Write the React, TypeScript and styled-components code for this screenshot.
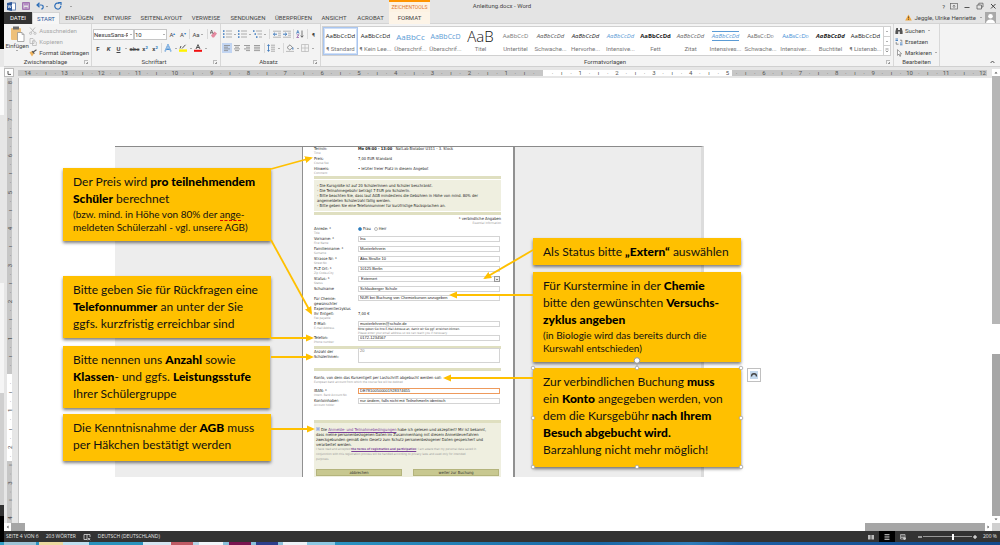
import React from "react";
import styled, { createGlobalStyle, css } from "styled-components";

const ui = `Roboto, "Open Sans", sans-serif`;
const web = `"DejaVu Sans Condensed", "DejaVu Sans", sans-serif`;

const GlobalStyle = createGlobalStyle`
  * { box-sizing: border-box; }
  body { margin: 0; background: #000; font-family: ${ui}; font-size: 6px; color: #444; }
  button, input, select, textarea {
    font: inherit; color: inherit; margin: 0; padding: 0; border: 0;
    background: none; border-radius: 0; appearance: none; outline: 0;
  }
`;

/* ---------- shell ---------- */
const Desktop = styled.div`
  display: flex;
  flex-direction: column;
  min-height: 100vh;
  overflow: hidden;
`;
const Windows = styled.div`
  flex: 1;
  display: flex;
`;
const BackWindow = styled.div`
  width: 4px;
  flex: none;
  display: flex;
  flex-direction: column;
  background: #000;
`;
const BackPart = styled.div<{ $h?: number; $c: string }>`
  flex: ${(p) => (p.$h ? `0 0 ${p.$h}px` : 1)};
  background: ${(p) => p.$c};
`;
const WordWindow = styled.div`
  flex: 1;
  min-width: 0;
  display: flex;
  flex-direction: column;
  background: #e6e6e6;
`;
const Taskbar = styled.div`
  height: 3px;
  display: flex;
  padding-left: 4px;
  background: linear-gradient(90deg, #2f9fc4 0%, #2b93c2 34%, #1a67a6 60%, #2f7dbb 69%, #1d5fa6 74%, #134a8c 100%);
`;
const Task = styled.div<{ $c: string; $w: number }>`
  width: ${(p) => p.$w}px;
  background: ${(p) => p.$c};
`;

/* ---------- title bar and tabs ---------- */
const TitleBar = styled.header`
  height: 12px;
  display: grid;
  grid-template-columns: 1fr auto 1fr;
  background: #e4e4e4;
  line-height: 11px;
`;
const TitleLeft = styled.div`
  display: flex;
`;
const QuickAccess = styled.div`
  width: 385px;
  display: flex;
  align-items: center;
  gap: 6px;
  padding-left: 3px;
`;
const ToolTabTitle = styled.div`
  width: 41px;
  text-align: center;
  color: #e0782c;
  background: #fdf2e2;
  border-top: 2px solid #ff9500;
  font-size: 5px;
  line-height: 10px;
`;
const Controls = styled.div`
  display: flex;
  justify-content: flex-end;
  align-items: center;
  gap: 5px;
  padding-right: 3px;
`;
const IconButton = styled.button`
  display: flex;
  align-items: center;
  justify-content: center;
`;
const TabRow = styled.nav`
  height: 12px;
  display: flex;
  background: #e4e4e4;
  border-bottom: 1px solid #d4d4d4;
`;
const Tab = styled.button<{ $w: number; $kind?: "file" | "active" | "tool" }>`
  width: ${(p) => p.$w}px;
  height: 12px;
  line-height: 12px;
  text-align: center;
  ${(p) => p.$kind === "file" && css`background: #333; color: #fff;`}
  ${(p) => p.$kind === "active" && css`background: #f6f6f6; color: #2b579a; border: 1px solid #d4d4d4; border-bottom: 0; line-height: 10px;`}
  ${(p) => p.$kind === "tool" && css`background: #fdf4e7;`}
`;
const Account = styled.button`
  margin-left: auto;
  display: flex;
  align-items: center;
  gap: 2px;
  padding-right: 4px;
  white-space: nowrap;
`;

/* ---------- ribbon ---------- */
const Ribbon = styled.section`
  height: 43px;
  display: flex;
  background: #f3f3f3;
  border-bottom: 1px solid #d0d0d0;
`;
const Group = styled.div<{ $w?: number }>`
  flex: ${(p) => (p.$w ? `0 0 ${p.$w}px` : "1 1 0")};
  min-width: 0;
  display: flex;
  flex-direction: column;
  border-right: 1px solid #d8d8d8;
`;
const GroupBody = styled.div`
  flex: 1;
  display: flex;
  padding: 1px 2px 0 1px;
`;
const GroupLabel = styled.div`
  display: flex;
  align-items: center;
  height: 9px;
  padding: 0 3px;
  line-height: 8px;
  span { flex: 1; text-align: center; }
`;
const Launcher = styled.button`
  width: 4px;
  height: 4px;
  border-left: 1px solid #bbb;
  border-top: 1px solid #bbb;
  background: linear-gradient(135deg, transparent 60%, #999 60%);
`;
const PasteButton = styled.button`
  width: 25px;
  display: flex;
  flex-direction: column;
  align-items: center;
  line-height: 8px;
`;
const Stack = styled.div`
  display: flex;
  flex-direction: column;
`;
const LabelButton = styled.button<{ $off?: boolean }>`
  height: 11px;
  display: flex;
  align-items: center;
  gap: 2px;
  white-space: nowrap;
  color: ${(p) => (p.$off ? "#a6a6a6" : "#444")};
`;
const ToolRows = styled.div`
  display: flex;
  flex-direction: column;
  padding-top: 2px;
`;
const ToolRow = styled.div`
  height: 14px;
  display: flex;
  align-items: center;
`;
const Tool = styled.button<{ $w?: number; $on?: boolean; $b?: boolean; $i?: boolean; $u?: boolean; $s?: boolean }>`
  width: ${(p) => p.$w || 10}px;
  height: 10px;
  display: flex;
  align-items: center;
  justify-content: center;
  line-height: 9px;
  white-space: nowrap;
  background: ${(p) => (p.$on ? "#c2d5f2" : "none")};
  font-weight: ${(p) => (p.$b ? 700 : 400)};
  font-style: ${(p) => (p.$i ? "italic" : "normal")};
  text-decoration: ${(p) => (p.$u ? "underline" : p.$s ? "line-through" : "none")};
  sub, sup { font-size: 4px; line-height: 4px; color: #2b79c2; }
`;
const Caret = styled.span<{ $w?: number }>`
  width: ${(p) => p.$w || 5}px;
  display: flex;
  justify-content: center;
  &::after {
    content: "";
    border: 1px solid transparent;
    border-top-color: #666;
    border-bottom: 0;
  }
`;
const Divider = styled.span<{ $w?: number }>`
  width: ${(p) => p.$w || 3}px;
  height: 10px;
  display: flex;
  justify-content: center;
  &::after { content: ""; width: 1px; background: #d8d8d8; }
`;
const Combo = styled.div<{ $w: number }>`
  width: ${(p) => p.$w}px;
  height: 11px;
  display: flex;
  align-items: center;
  background: #fff;
  border: 1px solid #c6c6c6;
  select { flex: 1; min-width: 0; height: 9px; line-height: 9px; color: #333; }
`;
const Gallery = styled.div`
  flex: 1;
  min-width: 0;
  height: 30px;
  display: flex;
  margin-top: 1px;
  background: #fff;
  border: 1px solid #d0d0d0;
`;
const StyleItem = styled.button<{ $on?: boolean }>`
  flex: 1 1 0;
  min-width: 0;
  display: flex;
  flex-direction: column;
  align-items: center;
  border: 1px solid ${(p) => (p.$on ? "#a9c5ee" : "transparent")};
  box-shadow: ${(p) => (p.$on ? "inset 0 0 0 1px #cfdff7" : "none")};
`;
type SampleProps = { $c?: string; $size?: number; $b?: boolean; $i?: boolean; $caps?: boolean; $line?: boolean; $light?: boolean };
const Sample = styled.span<SampleProps>`
  height: 16px;
  display: flex;
  align-items: center;
  white-space: nowrap;
  font-family: "Open Sans", sans-serif;
  color: ${(p) => p.$c || "#222"};
  font-size: ${(p) => p.$size || 6}px;
  font-weight: ${(p) => (p.$b ? 700 : p.$light ? 300 : 400)};
  font-style: ${(p) => (p.$i ? "italic" : "normal")};
  font-variant: ${(p) => (p.$caps ? "small-caps" : "normal")};
  ${(p) => p.$line && css`
    height: 10px; margin: 3px 0; border-top: 1px solid #5b9bd5; border-bottom: 1px solid #5b9bd5;
  `}
`;
const StyleName = styled.span`
  line-height: 9px;
  white-space: nowrap;
  color: #777;
`;
const GalleryScroll = styled.div`
  width: 7px;
  display: flex;
  flex-direction: column;
  border-left: 1px solid #d0d0d0;
  button { flex: 1; display: flex; align-items: center; justify-content: center; }
  button + button { border-top: 1px solid #d0d0d0; }
`;
const RibbonTail = styled.div`
  flex: 0 0 60px;
  display: flex;
  align-items: flex-end;
  justify-content: flex-end;
  padding: 2px 5px;
`;

/* ---------- work area ---------- */
const Work = styled.main`
  flex: 1;
  display: flex;
`;
const WorkMain = styled.div`
  flex: 1;
  min-width: 0;
  display: flex;
  flex-direction: column;
`;
const RulerRow = styled.div`
  height: 11px;
  display: flex;
  align-items: center;
  padding-right: 5px;
`;
const TabStop = styled.button`
  width: 10px;
  height: 9px;
  margin-right: 4px;
  background: #fff;
  border: 1px solid #bbb;
  display: flex;
  align-items: center;
  justify-content: center;
`;
const HRuler = styled.div`
  flex: 1;
  height: 6px;
  display: flex;
  line-height: 6px;
`;
const Segment = styled.div<{ $f: number; $white?: boolean; $pad?: string; $col?: boolean }>`
  flex: ${(p) => p.$f} 1 0;
  min-width: 0;
  min-height: 0;
  display: flex;
  flex-direction: ${(p) => (p.$col ? "column" : "row")};
  padding: ${(p) => p.$pad || 0};
  background: ${(p) => (p.$white ? "#fff" : "#c6c6c6")};
  color: #555;
`;
const Tick = styled.span<{ $col?: boolean }>`
  flex: 1 1 0;
  min-width: 0;
  min-height: 0;
  display: flex;
  align-items: center;
  justify-content: center;
  ${(p) => p.$col && css`writing-mode: vertical-rl; transform: rotate(180deg); line-height: 6px;`}
`;
const PageRow = styled.div`
  flex: 1;
  display: flex;
  min-height: 445px;
`;
const VRuler = styled.div`
  width: 5px;
  margin: 0 6px 0 3px;
  display: flex;
  flex-direction: column;
`;
const Canvas = styled.div`
  flex: 1;
  position: relative;
  overflow: hidden;
  background: #fff;
  border-left: 1px solid #c6c6c6;
`;
const ScrollV = styled.div`
  width: 8px;
  display: flex;
  flex-direction: column;
  padding-top: 2px;
  background: #e6e6e6;
`;
const ScrollH = styled.div`
  height: 8px;
  display: flex;
`;
const Track = styled.div<{ $f: string; $c: string }>`
  flex: ${(p) => p.$f};
  background: ${(p) => p.$c};
`;
const ArrowButton = styled.button`
  flex: 0 0 7px;
  background: #fff;
  display: flex;
  align-items: center;
  justify-content: center;
`;
const Status = styled.footer`
  height: 11px;
  display: flex;
  align-items: center;
  gap: 7px;
  padding: 0 3px 0 2px;
  background: #333;
  color: #e6e6e6;
  font-family: "Open Sans", sans-serif;
  font-size: 5px;
  line-height: 11px;
`;
const ViewButtons = styled.div`
  margin-left: auto;
  display: flex;
  height: 11px;
  button { width: 16px; display: flex; align-items: center; justify-content: center; }
  button:nth-child(2) { background: #000; }
`;
const Zoom = styled.label`
  display: flex;
  align-items: center;
  gap: 1px;
  input { width: 49px; height: 6px; background: linear-gradient(#999, #999) center / 100% 1px no-repeat; }
  input::-webkit-slider-thumb { appearance: none; width: 2px; height: 6px; background: #fff; }
  output { margin-left: 5px; }
`;

/* ---------- objects placed on the page ---------- */
const Shot = styled.div`
  position: absolute;
  left: 96px;
  top: 68px;
  width: 589px;
  height: 331px;
  display: flex;
  overflow: hidden;
  background: #ededed;
  border-top: 1px solid #8a8a8a;
  border-right: 3px solid #dcdcdc;
  padding-left: 187px;
`;
const Form = styled.form`
  width: 213px;
  padding: 0 12px 0 11px;
  background: #fff;
  border-left: 1px solid #909090;
  border-right: 2px solid #909090;
  font-family: ${web};
  font-size: 4px;
  line-height: 4px;
  color: #222;
  white-space: nowrap;
`;
const Band = styled.div<{ $top?: number }>`
  height: 3px;
  margin-top: ${(p) => p.$top || 0}px;
  background: #dfdfc0;
`;
const Notice = styled.div`
  margin: 1px 0;
  padding: 3px;
  background: #efefe0;
  line-height: 5px;
`;
const Required = styled.div`
  margin: 2px 0;
  text-align: right;
`;
const Row = styled.div<{ $h?: number }>`
  height: ${(p) => p.$h || 10}px;
  display: grid;
  grid-template-columns: 44px 1fr;
  align-items: start;
`;
const Caption = styled.label<{ $lines?: boolean }>`
  display: block;
  line-height: ${(p) => (p.$lines ? 5 : 4)}px;
`;
const Hint = styled.small<{ $dark?: boolean }>`
  display: block;
  font-size: 3px;
  line-height: 4px;
  color: ${(p) => (p.$dark ? "#222" : "#999")};
`;
const field = css`
  display: block;
  width: 142px;
  margin-top: -1px;
  padding-left: 2px;
  background: #fff;
  box-shadow: inset 0 0 0 1px #d4d4d4;
  font-family: "Liberation Sans", Arial, sans-serif;
  font-size: 4px;
  line-height: 6px;
`;
const Field = styled.input<{ $focus?: boolean }>`
  ${field}
  height: 6px;
  ${(p) => p.$focus && css`box-shadow: inset 0 0 0 1px #ee9a5c;`}
`;
const Area = styled.textarea`
  ${field}
  height: 15px;
  resize: none;
  color: #777;
`;
const SelectWrap = styled.div`
  display: flex;
  align-items: center;
  width: 142px;
  height: 6px;
  margin-top: -1px;
  box-shadow: inset 0 0 0 1px #d4d4d4;
  font-family: "Liberation Sans", Arial, sans-serif;
  select { flex: 1; height: 6px; padding-left: 3px; line-height: 6px; }
  span { width: 6px; height: 6px; background: #eee; border: 1px solid #999; display: flex; }
  span::after { content: ""; margin: auto; border: 1px solid transparent; border-top-color: #222; border-bottom: 0; }
`;
const Choice = styled.label`
  display: inline-flex;
  align-items: center;
  gap: 1px;
  margin-right: 3px;
  input { width: 4px; height: 4px; border-radius: 2px; border: 1px solid #bbb; }
  input:checked { background: #1c6fb5; border-color: #5a9bd0; }
`;
const AccountNote = styled.div`
  margin: 5px 0;
`;
const Terms = styled.div`
  height: 56px;
  padding: 4px 2px 0;
  background: #efefe0;
  line-height: 5px;
  a { color: #7a3f98; }
  input { width: 4px; height: 4px; background: #9fb2dc; border: 1px solid #c2cbe2; vertical-align: top; margin-right: 1px; }
`;
const TermsEn = styled.small`
  display: block;
  font-size: 3px;
  line-height: 5px;
  color: #999;
  a { font-weight: 700; }
`;
const Actions = styled.div`
  display: grid;
  grid-template-columns: 86px 86px;
  justify-content: space-between;
  margin-top: 7px;
  button { height: 7px; background: #c8c890; border: 1px solid #b4b47c; color: #333; line-height: 4px; }
`;
const Arrows = styled.svg`
  position: absolute;
  inset: 0;
  width: 100%;
  height: 100%;
`;
const Callout = styled.div<{ $x: number; $y: number; $w: number; $h: number }>`
  position: absolute;
  left: ${(p) => p.$x}px;
  top: ${(p) => p.$y}px;
  width: ${(p) => p.$w}px;
  height: ${(p) => p.$h}px;
  padding: 5px 0 0 10px;
  background: #ffc000;
  box-shadow: 0 2px 3px rgba(0, 0, 0, 0.5);
  font-family: Lato, sans-serif;
  font-size: 12px;
  line-height: 17px;
  color: #111;
  white-space: nowrap;
  b { font-weight: 900; color: #000; }
`;
const Small = styled.div`
  padding-top: 1px;
  font-size: 10px;
  line-height: 13px;
`;
const Misspelled = styled.span`
  border-bottom: 1px dashed #e00000;
`;
const LayoutOptions = styled.button`
  position: absolute;
  left: 728px;
  top: 290px;
  width: 14px;
  height: 14px;
  display: flex;
  align-items: center;
  justify-content: center;
  background: #fff;
  border: 1px solid #c0c0c0;
`;

/* ---------- icons ---------- */
const Svg = ({ w = 8, h = 8, children }: { w?: number; h?: number; children: React.ReactNode }) => (
  <svg width={w} height={h} viewBox={`0 0 ${w} ${h}`} fill="none" aria-hidden="true">{children}</svg>
);
const Lines = ({ xs }: { xs: [number, number][] }) => (
  <Svg>{xs.map(([a, b], i) => <path key={i} d={`M${a} ${1.5 + i * 1.7}H${b}`} stroke="#888" strokeWidth=".8" />)}</Svg>
);
const ListIcon = ({ step = 0 }: { step?: number }) => (
  <Svg w={9}>
    {[1, 4, 7].map((y, i) => (
      <g key={y}>
        <rect x={i * step} y={y - 0.7} width="1.5" height="1.5" fill="#3b78bd" />
        <path d={`M${3 + i * step} ${y}H9`} stroke="#999" strokeWidth=".8" />
      </g>
    ))}
  </Svg>
);
const IndentIcon = ({ flip }: { flip?: boolean }) => (
  <Svg>
    <path d="M0 1.2H8M5 3.2H8M5 5.2H8M0 7.2H8" stroke="#999" strokeWidth=".7" />
    <path d={flip ? "M0 4.2H3.5M2.2 2.8L3.8 4.2L2.2 5.6" : "M4 4.2H.6M1.9 2.8L.4 4.2L1.9 5.6"} stroke="#2f6fb8" strokeWidth=".9" />
  </Svg>
);

/* ---------- data ---------- */
const tabs: [string, number][] = [
  ["EINFÜGEN", 39], ["ENTWURF", 37], ["SEITENLAYOUT", 51], ["VERWEISE", 38],
  ["SENDUNGEN", 46], ["ÜBERPRÜFEN", 45], ["ANSICHT", 36], ["ACROBAT", 37],
];
const sampleText = "AaBbCcDd";
const styleItems: (SampleProps & { name: string; text?: string })[] = [
  { name: "¶ Standard" },
  { name: "¶ Kein Lee..." },
  { name: "Überschrif...", text: "AaBbCc", $size: 8, $c: "#5b9bd5" },
  { name: "Überschrif...", text: "AaBbCcD", $size: 7, $c: "#5b9bd5" },
  { name: "Titel", text: "AaB", $size: 15, $c: "#111", $light: true },
  { name: "Untertitel", text: "AaBbCcD", $c: "#777" },
  { name: "Schwache...", $i: true, $c: "#555" },
  { name: "Hervorhe...", $i: true },
  { name: "Intensive...", $i: true, $c: "#5b9bd5" },
  { name: "Fett", $b: true },
  { name: "Zitat", $i: true, $c: "#666" },
  { name: "Intensives...", $i: true, $c: "#5b9bd5", $line: true },
  { name: "Schwache...", $caps: true, $c: "#666" },
  { name: "Intensiver...", $caps: true, $c: "#3f8fd6" },
  { name: "Buchtitel", $b: true, $i: true },
  { name: "¶ Listenab..." },
];
const tick = (k: number) => (k % 4 === 0 ? String(k / 4) : k % 2 === 0 ? "ı" : "·");
const down = (from: number, n: number) => Array.from({ length: n }, (_, i) => tick(from - i));
const up = (from: number, n: number) => Array.from({ length: n }, (_, i) => tick(from + i));
const Ticks = ({ items, col }: { items: string[]; col?: boolean }) => (
  <>{items.map((t, i) => <Tick key={i} $col={col}>{t}</Tick>)}</>
);

const textRows: [string, string, string][] = [
  ["Vorname: *", "First Name", "Ina"],
  ["Familienname: *", "Surname", "Musterlehrerin"],
  ["Strasse Nr: *", "Street No", "Abo-Straße 10"],
  ["PLZ Ort: *", "Zip Code+City", "10125 Berlin"],
];
const arrows = [
  "M252 91L292 80", "M252 162L292 235", "M252 260H293", "M252 279H293",
  "M252 351H294", "M514 172L466 200", "M514 217H432", "M514 300H426",
];
const tasks: [string, number][] = [
  ["#9cc4d6", 32], ["#2b93c2", 3], ["#ecd9a0", 24], ["#bfe0f0", 26], ["#2a93bd", 54],
  ["#d6e6f2", 28], ["#c05a64", 22], ["#b8d4e6", 6], ["#f2f6fa", 24], ["#8ac0da", 6],
  ["#7b1450", 22], ["#8ac0da", 5], ["#2d3f8c", 22], ["#8ac0da", 5], ["#eef3f8", 24], ["#8cc9e4", 28],
];

function RibbonBar() {
  return (
    <Ribbon>
      <Group $w={88}>
        <GroupBody>
          <PasteButton>
            <Svg w={15} h={17}>
              <rect x="1" y="3" width="10" height="12" rx="1" fill="#eec07a" />
              <rect x="3" y="1.5" width="6" height="3" fill="#6b6b6b" />
              <path d="M7.5 7.5H12L14 9.5V16.5H7.5Z" fill="#fff" stroke="#8a8a8a" strokeWidth=".7" />
              <path d="M12 7.5V9.5H14" stroke="#8a8a8a" strokeWidth=".6" />
            </Svg>
            Einfügen
            <Caret />
          </PasteButton>
          <Stack>
            <LabelButton $off>
              <Svg><path d="M1 .5L5.5 5.5M6 .5L2 5.5" stroke="#b0b0b0" strokeWidth=".8" /><circle cx="1.6" cy="6.3" r="1.1" stroke="#b0b0b0" strokeWidth=".7" /><circle cx="6" cy="6.3" r="1.1" stroke="#b0b0b0" strokeWidth=".7" /></Svg>
              Ausschneiden
            </LabelButton>
            <LabelButton $off>
              <Svg><path d="M1 .5H4L5 1.5V5.5H1ZM3.5 2.8H6L7.3 4V7.5H3.5Z" fill="#f3f3f3" stroke="#b0b0b0" strokeWidth=".7" /></Svg>
              Kopieren
            </LabelButton>
            <LabelButton>
              <Svg><path d="M.5 3.5L3 2L5 4.5L3 7.5Z" fill="#eeb25c" /><path d="M3.5 3.5L7.5 .8M3.2 2.2L5.4 4.6" stroke="#555" strokeWidth="1.1" /></Svg>
              Format übertragen
            </LabelButton>
          </Stack>
        </GroupBody>
        <GroupLabel><span>Zwischenablage</span><Launcher aria-label="Zwischenablage öffnen" /></GroupLabel>
      </Group>

      <Group $w={129}>
        <GroupBody>
          <ToolRows>
            <ToolRow>
              <Combo $w={41}><select aria-label="Schriftart"><option>NexusSans-R</option></select><Caret /></Combo>
              <Combo $w={33}><select aria-label="Schriftgrad"><option>10</option></select><Caret /></Combo>
              <Tool $w={11}>A<sup>▴</sup></Tool>
              <Tool>A<sup>▾</sup></Tool>
              <Divider />
              <Tool $w={15}>Aa<Caret /></Tool>
              <Divider />
              <Tool><Svg><path d="M1 5.5L4.5 1.5L7 3.5L4 7.5H2.5Z" fill="#e58aa0" /><path d="M0 4L1.6 0L3.2 4M.6 2.7H2.6" stroke="#555" strokeWidth=".7" /></Svg></Tool>
            </ToolRow>
            <ToolRow>
              <Tool $b>F</Tool>
              <Tool $w={11} $b $i>K</Tool>
              <Tool $w={9} $b $u>U</Tool>
              <Caret $w={6} />
              <Tool $w={11} $s>abc</Tool>
              <Tool $b>x<sub>2</sub></Tool>
              <Tool $b>x<sup>2</sup></Tool>
              <Divider />
              <Tool><Svg><path d="M1 7.5L4 .8L7 7.5M2.2 5.2H5.8" stroke="#4a8fd4" strokeWidth="1.4" /><path d="M1 7.5L4 .8L7 7.5" stroke="#fff" strokeWidth=".4" /></Svg></Tool>
              <Caret />
              <Tool><Svg><path d="M1 4.5L2 2M3 4.5L6.5 .8" stroke="#555" strokeWidth="1" /><rect y="5.4" width="8" height="2.4" fill="#fff200" /></Svg></Tool>
              <Caret />
              <Tool><Svg><path d="M2 5L4 .6L6 5M2.8 3.5H5.2" stroke="#444" strokeWidth=".9" /><rect y="5.8" width="8" height="2" fill="#f01010" /></Svg></Tool>
              <Caret />
            </ToolRow>
          </ToolRows>
        </GroupBody>
        <GroupLabel><span>Schriftart</span><Launcher aria-label="Schriftart öffnen" /></GroupLabel>
      </Group>

      <Group $w={100}>
        <GroupBody>
          <ToolRows>
            <ToolRow>
              <Tool $w={11}><ListIcon /></Tool><Caret $w={4} />
              <Tool $w={11}><ListIcon /></Tool><Caret $w={4} />
              <Tool $w={11}><ListIcon step={1.5} /></Tool><Caret $w={4} />
              <Divider $w={5} />
              <Tool><IndentIcon /></Tool>
              <Tool><IndentIcon flip /></Tool>
              <Divider />
              <Tool><Svg><path d="M.5 3.6L1.8 .4L3.1 3.6M1 2.6H2.6" stroke="#2f6fb8" strokeWidth=".7" /><path d="M.7 4.8H3L.7 7.5H3" stroke="#8a4fa0" strokeWidth=".7" /><path d="M6 .5V7M4.7 5.6L6 7.3L7.3 5.6" stroke="#555" strokeWidth=".8" /></Svg></Tool>
              <Divider $w={4} />
              <Tool $w={9}>¶</Tool>
            </ToolRow>
            <ToolRow>
              <Tool $on><Lines xs={[[1, 7], [1, 5], [1, 7], [1, 5]]} /></Tool>
              <Tool><Lines xs={[[1, 7], [2, 6], [1, 7], [2, 6]]} /></Tool>
              <Tool><Lines xs={[[1, 7], [3, 7], [1, 7], [3, 7]]} /></Tool>
              <Tool><Lines xs={[[1, 7], [1, 7], [1, 7], [1, 7]]} /></Tool>
              <Divider $w={4} />
              <Tool><Svg><path d="M1.5 .8V7.2M.4 2L1.5 .6L2.6 2M.4 6L1.5 7.4L2.6 6" stroke="#2f6fb8" strokeWidth=".8" /><path d="M4 1.2H8M4 3.2H8M4 5.2H8M4 7.2H8" stroke="#999" strokeWidth=".8" /></Svg></Tool>
              <Caret />
              <Divider $w={4} />
              <Tool><Svg><path d="M1 3.5L4 .8L6.5 3.5L3.8 6Z" stroke="#777" strokeWidth=".8" /><path d="M6.9 3.5V5.6" stroke="#2f6fb8" /><path d="M0 7.4H8" stroke="#bbb" /></Svg></Tool>
              <Caret />
              <Tool><Svg><path d="M.5 .5H7.5V7.5H.5ZM4 .5V7.5M.5 4H7.5" stroke="#b5b5b5" strokeWidth=".7" /></Svg></Tool>
              <Caret />
            </ToolRow>
          </ToolRows>
        </GroupBody>
        <GroupLabel><span>Absatz</span><Launcher aria-label="Absatz öffnen" /></GroupLabel>
      </Group>

      <Group>
        <GroupBody>
          <Gallery>
            {styleItems.map(({ name, text, ...look }, i) => (
              <StyleItem key={i} $on={i === 0}>
                <Sample {...look}>{text || sampleText}</Sample>
                <StyleName>{name}</StyleName>
              </StyleItem>
            ))}
            <GalleryScroll>
              <button aria-label="Zeile nach oben"><Caret /></button>
              <button aria-label="Zeile nach unten"><Caret /></button>
              <button aria-label="Weitere"><Svg w={4} h={5}><path d="M.5 1H3.5M.8 2.6L2 4L3.2 2.6" stroke="#666" strokeWidth=".7" /></Svg></button>
            </GalleryScroll>
          </Gallery>
        </GroupBody>
        <GroupLabel><span>Formatvorlagen</span><Launcher aria-label="Formatvorlagen öffnen" /></GroupLabel>
      </Group>

      <Group $w={46}>
        <GroupBody>
          <Stack>
            <LabelButton>
              <Svg><path d="M1.3 1H3V3H5V1H6.7L7.6 4.5V7H4.8V4.6H3.2V7H.4V4.5Z" fill="#555" /></Svg>
              Suchen<Caret />
            </LabelButton>
            <LabelButton>
              <Svg><path d="M.5 1H3M.5 2.5H3M5 5H7.5M5 6.8H7.5" stroke="#3b78bd" strokeWidth=".9" /><path d="M5 2.2H6.8V3.8M1.2 4V6.2H3.6" stroke="#666" strokeWidth=".7" /></Svg>
              Ersetzen
            </LabelButton>
            <LabelButton>
              <Svg><path d="M2.5 .6V6.4L3.9 5.1L4.9 7.4L5.8 7L4.8 4.8H6.6Z" fill="#fff" stroke="#666" strokeWidth=".6" /></Svg>
              Markieren<Caret />
            </LabelButton>
          </Stack>
        </GroupBody>
        <GroupLabel><span>Bearbeiten</span></GroupLabel>
      </Group>
      <RibbonTail>
        <IconButton aria-label="Menüband reduzieren"><Svg w={5} h={4}><path d="M.6 3L2.5 1L4.4 3" stroke="#555" /></Svg></IconButton>
      </RibbonTail>
    </Ribbon>
  );
}

function BookingForm() {
  return (
    <Form onSubmit={(e) => e.preventDefault()}>
      <Row><div>Termin:<Hint>Time</Hint></div><div><b>Mo 09:00 - 13:00</b> &nbsp; NatLab Biolabor U311 - 3. Stock</div></Row>
      <Row><div>Preis:<Hint>Course fee</Hint></div><div>7,00 EUR Standard</div></Row>
      <Row $h={9}><div>Hinweis:<Hint>Comment</Hint></div><div>• letzter freier Platz in diesem Angebot</div></Row>
      <Band />
      <Notice>
        - Die Kursgröße ist auf 20 SchülerInnen und Schüler beschränkt.<br />
        - Die Teilnahmegebühr beträgt 7 EUR pro SchülerIn.<br />
        - Bitte beachten Sie, dass laut AGB mindestens die Gebühren in Höhe von mind. 80% der<br />
        angemeldeten Schülerzahl fällig werden.<br />
        - Bitte geben Sie eine Telefonnummer für kurzfristige Rücksprachen an.
      </Notice>
      <Band />
      <Required>* verbindliche Angaben<Hint>Essential Information</Hint></Required>
      <Row>
        <div>Anrede: *<Hint>Title</Hint></div>
        <div>
          <Choice><input type="radio" name="anrede" defaultChecked />Frau</Choice>
          <Choice><input type="radio" name="anrede" />Herr</Choice>
        </div>
      </Row>
      {textRows.map(([label, hint, value]) => (
        <Row key={label}>
          <Caption htmlFor={hint}>{label}<Hint>{hint}</Hint></Caption>
          <Field id={hint} defaultValue={value} />
        </Row>
      ))}
      <Row>
        <Caption htmlFor="status">Status: *<Hint>Status</Hint></Caption>
        <SelectWrap><select id="status"><option>Externert</option></select><span /></SelectWrap>
      </Row>
      <Row $h={9}><Caption htmlFor="school">Schulname</Caption><Field id="school" defaultValue="Schlauberger Schule" /></Row>
      <Row $h={16}>
        <Caption htmlFor="cycle" $lines>Für Chemie:<br />gewünschter<br />Experimentierzyklus</Caption>
        <Field id="cycle" defaultValue="NUR bei Buchung von Chemiekursen anzugeben" />
      </Row>
      <Row><div>Ihr Entgelt:<Hint>Fee payable</Hint></div><div>7,00 €</div></Row>
      <Row $h={14}>
        <Caption htmlFor="mail">E-Mail:<Hint>E-mail Address</Hint></Caption>
        <div>
          <Field id="mail" defaultValue="musterlehrerin@schule.de" />
          <Hint $dark>Bitte geben Sie Ihre E-Mail Adresse an, damit wir Sie ggf. erreichen können.</Hint>
          <Hint>Please enter your email address so we can reach you if necessary.</Hint>
        </div>
      </Row>
      <Row $h={9}><Caption htmlFor="phone">Telefon:<Hint>Phone number</Hint></Caption><Field id="phone" defaultValue="0172-1234567" /></Row>
      <Band $top={1} />
      <Row $h={19}>
        <Caption htmlFor="count" $lines>Anzahl der<br />SchülerInnen:</Caption>
        <Area id="count" defaultValue="20" />
      </Row>
      <Band />
      <AccountNote>
        Konto, von dem das Kursentgelt per Lastschrift abgebucht werden soll:
        <Hint>European bank account from which the course fee will be debited</Hint>
      </AccountNote>
      <Row><Caption htmlFor="iban">IBAN: *<Hint>Intern. Bank Account No</Hint></Caption><Field id="iban" $focus defaultValue="DE78100500001928374655" /></Row>
      <Row><Caption htmlFor="owner">Kontoinhaber:<Hint>Account holder</Hint></Caption><Field id="owner" defaultValue="nur ändern, falls nicht mit TeilnehmerIn identisch" /></Row>
      <Band $top={11} />
      <Terms>
        <input type="checkbox" id="terms" defaultChecked />
        <label htmlFor="terms">
          Die <a href="#agb">Anmelde- und Teilnahmebedingungen</a> habe ich gelesen und akzeptiert! Mir ist bekannt,<br />
          dass meine personenbezogenen Daten im Zusammenhang mit diesem Anmeldeverfahren<br />
          zweckgebunden gemäß dem Gesetz zum Schutz personenbezogener Daten gespeichert und<br />
          verarbeitet werden.
        </label>
        <TermsEn>
          I have read and accepted <a href="#terms">the terms of registration and participation</a>! I am aware that my personal data saved in<br />
          conjunction with this registration process will be handled according to privacy laws and used only for intended<br />
          purposes.
        </TermsEn>
        <Actions><button type="button">abbrechen</button><button>weiter zur Buchung</button></Actions>
      </Terms>
    </Form>
  );
}

function Page() {
  return (
    <Canvas>
      <Shot><BookingForm /></Shot>
      <Callout $x={44} $y={90} $w={208} $h={73}>
        Der Preis wird <b>pro teilnehmendem<br />Schüler</b> berechnet
        <Small>(bzw. mind. in Höhe von 80% der <Misspelled>ange</Misspelled>-<br />meldeten Schülerzahl - vgl. unsere AGB)</Small>
      </Callout>
      <Callout $x={44} $y={198} $w={208} $h={62}>
        Bitte geben Sie für Rückfragen eine<br /><b>Telefonnummer</b> an unter der Sie<br />ggfs. kurzfristig erreichbar sind
      </Callout>
      <Callout $x={44} $y={268} $w={207} $h={62}>
        Bitte nennen uns <b>Anzahl</b> sowie<br /><b>Klassen</b>- und ggfs. <b>Leistungsstufe</b><br />Ihrer Schülergruppe
      </Callout>
      <Callout $x={44} $y={336} $w={208} $h={47}>
        Die Kenntnisnahme der <b>AGB</b> muss<br />per Häkchen bestätigt werden
      </Callout>
      <Callout $x={514} $y={160} $w={208} $h={27}>
        Als Status bitte <b>„Extern“</b> auswählen
      </Callout>
      <Callout $x={514} $y={194} $w={208} $h={90}>
        Für Kurstermine in der <b>Chemie</b><br />bitte den gewünschten <b>Versuchs-<br />zyklus angeben</b>
        <Small>(in Biologie wird das bereits durch die<br />Kurswahl entschieden)</Small>
      </Callout>
      <Callout $x={514} $y={290} $w={208} $h={99}>
        Zur verbindlichen Buchung <b>muss</b><br />ein <b>Konto</b> angegeben werden, von<br />dem die Kursgebühr <b>nach Ihrem<br />Besuch abgebucht wird.</b><br />Barzahlung nicht mehr möglich!
      </Callout>
      <Arrows aria-hidden="true">
        <defs>
          <marker id="head" markerUnits="userSpaceOnUse" markerWidth="8" markerHeight="8" refX="6" refY="4" orient="auto">
            <path d="M0 .5L8 4L0 7.5Z" fill="#ffc000" />
          </marker>
        </defs>
        {arrows.map((d) => <path key={d} d={d} stroke="#ffc000" strokeWidth="1.8" fill="none" markerEnd="url(#head)" />)}
        <g fill="#fff" stroke="#999" strokeWidth=".7">
          <path d="M618 285V290" />
          {[[514, 290], [618, 290], [722, 290], [514, 340], [722, 340], [514, 389], [618, 389], [722, 389]].map(([x, y]) => (
            <circle key={`${x}-${y}`} cx={x} cy={y} r="1.8" />
          ))}
          <circle cx="618" cy="282.5" r="2.8" strokeWidth="1" />
        </g>
      </Arrows>
      <LayoutOptions aria-label="Layoutoptionen">
        <Svg><rect width="8" height="8" fill="#c3d8ec" /><path d="M1.5 5.5C1.5 1.8 6.5 1.8 6.5 5.5" stroke="#444" strokeWidth="1.3" /></Svg>
      </LayoutOptions>
    </Canvas>
  );
}

export default function App() {
  return (
    <>
      <GlobalStyle />
      <Desktop>
        <Windows>
          <BackWindow>
            <BackPart $h={49} $c="#000" />
            <BackPart $h={18} $c="#e8e8e8" />
            <BackPart $h={48} $c="#fafafa" />
            <BackPart $h={168} $c="#e6e6e6" />
            <BackPart $h={110} $c="#f5f5f5" />
            <BackPart $h={112} $c="#cfcfcf" />
            <BackPart $h={11} $c="#333" />
            <BackPart $c="#000" />
          </BackWindow>
          <WordWindow>
            <TitleBar>
              <TitleLeft>
                <QuickAccess>
                  <Svg w={9} h={9}><rect x="3" y="1" width="5.5" height="7" fill="#fff" stroke="#2b579a" strokeWidth=".7" /><path d="M0 1L5 0V9L0 8Z" fill="#2b579a" /><path d="M1 3L1.8 6L2.6 3.4L3.4 6L4.2 3" stroke="#fff" strokeWidth=".6" /></Svg>
                  <IconButton aria-label="Speichern"><Svg><path d="M.8 .8H7.2V7.2H.8Z" stroke="#8a4fa0" strokeWidth="1.1" /><path d="M2 1H6V3.6H2ZM2.4 5H5.6V7H2.4Z" fill="#b58cc4" /></Svg></IconButton>
                  <IconButton aria-label="Rückgängig"><Svg w={12}><path d="M3.5 .8L1 3L3.5 5.2M1.3 3H5Q7.2 3 7.2 5T5.2 7" stroke="#2f6fb8" strokeWidth="1.2" /><path d="M10 4H12L11 5.2Z" fill="#666" /></Svg></IconButton>
                  <IconButton aria-label="Wiederholen"><Svg><path d="M5.5 1.6A3 3 0 1 0 6.8 4M4.2 .7H7V3.2" stroke="#2f6fb8" strokeWidth="1.2" /></Svg></IconButton>
                  <Caret />
                </QuickAccess>
                <ToolTabTitle>ZEICHENTOOLS</ToolTabTitle>
              </TitleLeft>
              <span>Anleitung.docx - Word</span>
              <Controls>
                <IconButton aria-label="Hilfe">?</IconButton>
                <IconButton aria-label="Menüband-Anzeigeoptionen"><Svg><rect x=".5" y="1.5" width="7" height="5.5" stroke="#666" strokeWidth=".7" /><path d="M4 6V3.4M2.8 4.4L4 3.2L5.2 4.4" stroke="#666" strokeWidth=".8" /></Svg></IconButton>
                <IconButton aria-label="Minimieren"><Svg><path d="M1.5 5.5H6.5" stroke="#555" /></Svg></IconButton>
                <IconButton aria-label="Verkleinern"><Svg><path d="M1 3H5.5V7H1ZM2.8 3V1.2H7V5H5.5" stroke="#555" strokeWidth=".7" /></Svg></IconButton>
                <IconButton aria-label="Schließen"><Svg><path d="M2 2L6.5 6.5M6.5 2L2 6.5" stroke="#444" strokeWidth="1" /></Svg></IconButton>
              </Controls>
            </TitleBar>
            <TabRow>
              <Tab $w={28} $kind="file">DATEI</Tab>
              <Tab $w={28} $kind="active">START</Tab>
              {tabs.map(([name, w]) => <Tab key={name} $w={w}>{name}</Tab>)}
              <Tab $w={41} $kind="tool">FORMAT</Tab>
              <Account>
                <Svg w={7} h={7}><path d="M3.5 .5L6.8 6.5H.2Z" fill="#f0a63c" /><path d="M3.5 2.4V4.4M3.5 5V5.8" stroke="#333" strokeWidth=".7" /></Svg>
                Jeggle, Ulrike Henriette
                <Caret />
                <Svg w={11} h={11}><rect width="11" height="11" fill="#a9a9a9" /><circle cx="5.5" cy="4.3" r="2.3" fill="#fff" /><path d="M1 11Q1.5 7.4 5.5 7.4T10 11Z" fill="#fff" /></Svg>
              </Account>
            </TabRow>
            <RibbonBar />
            <Work>
              <WorkMain>
                <RulerRow>
                  <TabStop aria-label="Tabstopp"><Svg w={4} h={4}><path d="M1 0V3.4H4" stroke="#555" /></Svg></TabStop>
                  <HRuler>
                    <Segment $f={515} $pad="0 5px"><Ticks items={down(56, 56)} /></Segment>
                    <Segment $f={184} $white $pad="0 0 0 5px"><Ticks items={up(1, 20)} /></Segment>
                    <Segment $f={255}><Ticks items={up(21, 28)} /></Segment>
                  </HRuler>
                </RulerRow>
                <PageRow>
                  <VRuler>
                    <Segment $col $f={292} $pad="0 0 4px"><Ticks col items={down(32, 32)} /></Segment>
                    <Segment $col $white $f={82} $pad="5px 0 0"><Ticks col items={up(1, 9)} /></Segment>
                    <Segment $col $f={62}><Ticks col items={up(10, 7)} /></Segment>
                  </VRuler>
                  <Page />
                </PageRow>
                <ScrollH>
                  <ArrowButton aria-label="Nach links"><Svg w={3} h={4}><path d="M2.5 .5L.8 2L2.5 3.5Z" fill="#555" /></Svg></ArrowButton>
                  <Track $f="0 0 14px" $c="#a6a6a6" />
                  <Track $f="838" $c="#fff" />
                  <Track $f="120" $c="#a6a6a6" />
                  <ArrowButton aria-label="Nach rechts"><Svg w={3} h={4}><path d="M.5 .5L2.2 2L.5 3.5Z" fill="#555" /></Svg></ArrowButton>
                </ScrollH>
              </WorkMain>
              <ScrollV>
                <ArrowButton aria-label="Nach oben"><Svg w={4} h={3}><path d="M.5 2.5L2 .8L3.5 2.5Z" fill="#555" /></Svg></ArrowButton>
                <Track $f="245" $c="#b6b6b6" />
                <Track $f="30" $c="#fff" />
                <Track $f="160" $c="#a6a6a6" />
                <ArrowButton aria-label="Nach unten"><Svg w={4} h={3}><path d="M.5 .5L2 2.2L3.5 .5Z" fill="#555" /></Svg></ArrowButton>
                <Track $f="0 0 8px" $c="#d0d0d0" />
              </ScrollV>
            </Work>
            <Status>
              <span>SEITE 4 VON 6</span>
              <span>203 WÖRTER</span>
              <Svg><path d="M4 1.5V7M4 1.5H1V6.5H4M4 1.5H7V4M5 5L7.2 7.2M7.2 5L5 7.2" stroke="#ddd" strokeWidth=".8" /></Svg>
              <span>DEUTSCH (DEUTSCHLAND)</span>
              <ViewButtons>
                <button aria-label="Lesemodus"><Svg w={6} h={6}><path d="M0 1H2.6V5.5H0ZM3.4 1H6V5.5H3.4Z" fill="#bbb" /></Svg></button>
                <button aria-label="Seitenlayout"><Svg w={6} h={6}><path d="M.5 .5H5.5M.5 2.2H5.5M.5 3.9H5.5M.5 5.5H5.5" stroke="#aaa" strokeWidth="1" /></Svg></button>
                <button aria-label="Weblayout"><Svg w={6} h={6}><path d="M.5 .5H5V5H.5ZM1 2H4.5M1 3.5H4.5" stroke="#bbb" strokeWidth=".8" /><circle cx="4.6" cy="4.6" r="1.4" fill="#ccc" /></Svg></button>
              </ViewButtons>
              <Zoom>
                <Svg w={4} h={4}><path d="M0 2H4" stroke="#fff" /></Svg>
                <input type="range" aria-label="Zoom" min="0" max="100" defaultValue="62" />
                <Svg w={4} h={4}><path d="M0 2H4M2 0V4" stroke="#fff" /></Svg>
                <output>200 %</output>
              </Zoom>
            </Status>
          </WordWindow>
        </Windows>
        <Taskbar>{tasks.map(([c, w], i) => <Task key={i} $c={c} $w={w} />)}</Taskbar>
      </Desktop>
    </>
  );
}
